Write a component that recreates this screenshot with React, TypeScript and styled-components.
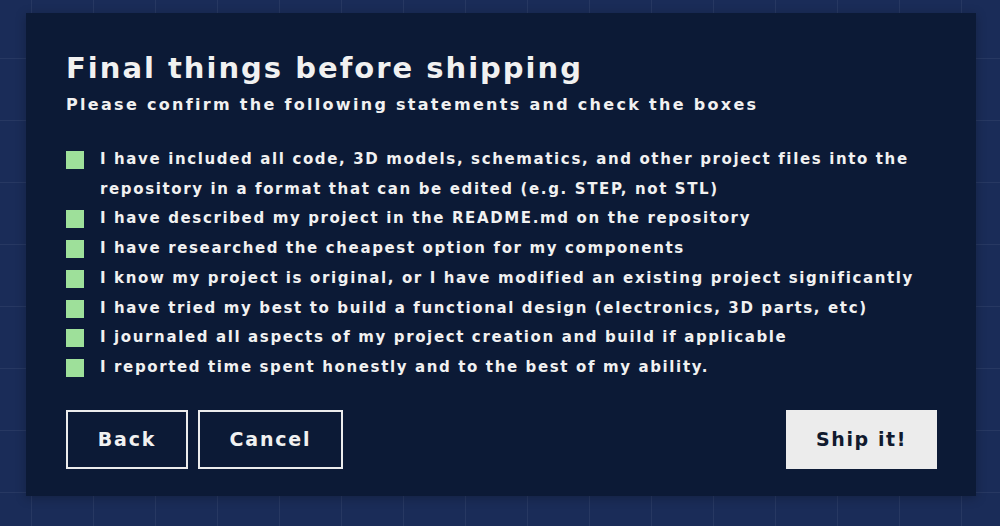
import styled, { createGlobalStyle } from 'styled-components';

const GlobalStyle = createGlobalStyle`
  html, body {
    margin: 0;
    padding: 0;
  }
  body {
    background-color: #1a2c58;
    background-image:
      linear-gradient(to right, rgba(255, 255, 255, 0.06) 1px, transparent 1px),
      linear-gradient(to bottom, rgba(255, 255, 255, 0.06) 1px, transparent 1px);
    background-size: 62px 62px;
    background-position: 31px 58px;
    font-family: 'DejaVu Sans', sans-serif;
  }
`;

const statements = [
  'I have included all code, 3D models, schematics, and other project files into the repository in a format that can be edited (e.g. STEP, not STL)',
  'I have described my project in the README.md on the repository',
  'I have researched the cheapest option for my components',
  'I know my project is original, or I have modified an existing project significantly',
  'I have tried my best to build a functional design (electronics, 3D parts, etc)',
  'I journaled all aspects of my project creation and build if applicable',
  'I reported time spent honestly and to the best of my ability.',
];

const App = () => {
  return (
    <>
      <GlobalStyle />
      <Page>
        <Modal>
          <Title>Final things before shipping</Title>
          <Subtitle>Please confirm the following statements and check the boxes</Subtitle>
          <List>
            {statements.map((s) => (
              <Item key={s}>
                <Box />
                <span>{s}</span>
              </Item>
            ))}
          </List>
          <Actions>
            <Group>
              <OutlineButton $width={122}>Back</OutlineButton>
              <OutlineButton $width={145}>Cancel</OutlineButton>
            </Group>
            <ShipButton>Ship it!</ShipButton>
          </Actions>
        </Modal>
      </Page>
    </>
  );
};

export default App;

const Page = styled.div`
  min-height: 526px;
  padding: 13px 24px 30px 26px;
  box-sizing: border-box;
`;

const Modal = styled.div`
  width: 950px;
  height: 483px;
  box-sizing: border-box;
  background: #0c1a36;
  padding: 37px 39px 0 40px;
  color: #f1f1f1;
  box-shadow: 0 2px 10px rgba(0, 0, 0, 0.25);
`;

const Title = styled.h1`
  margin: 0;
  font-size: 29px;
  line-height: 36px;
  font-weight: 600;
  letter-spacing: 2px;
`;

const Subtitle = styled.p`
  margin: 8px 0 0;
  font-size: 16px;
  line-height: 22px;
  font-weight: 700;
  letter-spacing: 2.3px;
`;

const List = styled.ul`
  list-style: none;
  margin: 29px 0 0;
  padding: 0;
  display: flex;
  flex-direction: column;
`;

const Item = styled.li`
  display: flex;
  gap: 16px;
  font-size: 15px;
  line-height: 29.7px;
  font-weight: 700;
  letter-spacing: 1.63px;
`;

const Box = styled.span`
  flex: none;
  width: 18px;
  height: 18px;
  margin-top: 6px;
  background: #9ee09a;
`;

const Actions = styled.div`
  display: flex;
  justify-content: space-between;
  align-items: center;
  margin-top: 27px;
`;

const Group = styled.div`
  display: flex;
  gap: 10px;
`;

const OutlineButton = styled.button<{ $width: number }>`
  width: ${(p) => p.$width}px;
  height: 59px;
  background: transparent;
  border: 2px solid #ececec;
  color: #f1f1f1;
  font-family: 'DejaVu Sans', sans-serif;
  font-size: 19px;
  font-weight: 700;
  letter-spacing: 1.8px;
`;

const ShipButton = styled.button`
  width: 151px;
  height: 59px;
  background: #ececec;
  border: none;
  color: #111a2e;
  font-family: 'DejaVu Sans', sans-serif;
  font-size: 19px;
  font-weight: 600;
  letter-spacing: 1.6px;
`;
